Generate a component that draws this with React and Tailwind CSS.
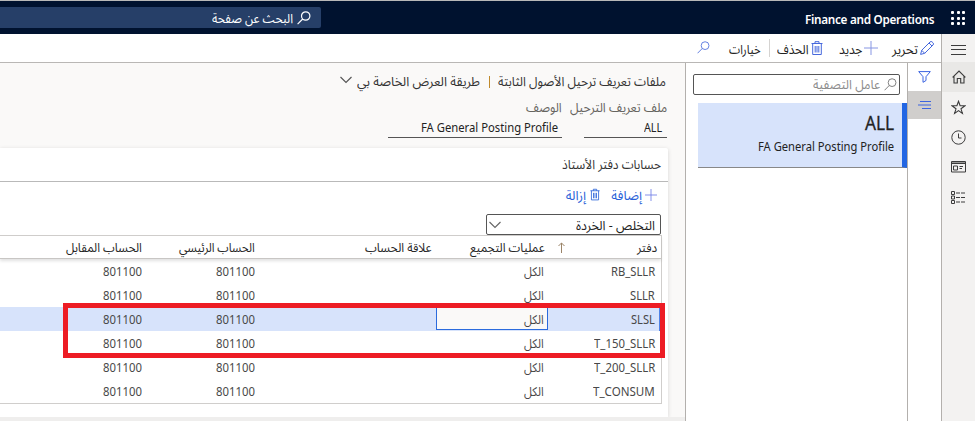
import { useLayoutEffect, useRef, useState } from "react";

// Text run that is condensed or stretched to fill its given width.
function Fit({ w, ltr = false, className = "", children }) {
  const ref = useRef(null);
  const [scale, setScale] = useState(1);
  useLayoutEffect(() => {
    const natural = ref.current.offsetWidth;
    if (natural) setScale(w / natural);
  }, [w, children]);
  return (
    <span dir={ltr ? "ltr" : "rtl"} className={`block shrink-0 whitespace-nowrap ${className}`} style={{ width: w }}>
      <span
        ref={ref}
        className={`inline-block ${ltr ? "origin-left" : "origin-right"}`}
        style={{ transform: `scaleX(${scale})` }}
      >
        {children}
      </span>
    </span>
  );
}

function Svg({ className = "", box = "0 0 16 16", sw = 1, children }) {
  return (
    <svg viewBox={box} className={`block shrink-0 ${className}`} fill="none" stroke="currentColor" strokeWidth={sw}>
      {children}
    </svg>
  );
}

const Search = ({ className, sw = 1 }) => (
  <Svg className={className} box="0 0 14 14" sw={sw}>
    <circle cx="8.7" cy="5" r="4.2" />
    <path d="M5.7 8 .6 13.2" />
  </Svg>
);
const Plus = ({ className }) => (
  <Svg className={className} box="0 0 14 14">
    <path d="M7 0v14M0 7h14" />
  </Svg>
);
const Trash = ({ className }) => (
  <Svg className={className} box="0 0 12 14">
    <path d="M.5 2.500h11M4 2.500V.7h4v1.800M1.700 2.500v11h8.600v-11M4.200 5v6.500M6 5v6.500M7.800 5v6.500" />
  </Svg>
);
const Chevron = ({ className }) => (
  <Svg className={className} box="0 0 12 8" sw={1.15}>
    <path d="M.5 1 6 6.500 11.500 1" />
  </Svg>
);

const rows = [
  ["RB_SLLR", 44],
  ["SLLR", 25],
  ["SLSL", 24],
  ["T_150_SLLR", 61],
  ["T_200_SLLR", 61],
  ["T_CONSUM", 62],
];

function Header() {
  return (
    <header className="flex h-[34px] shrink-0 border-t border-[#b8b8b8] bg-[#00122f] text-white">
      <div className="mr-[10px] mt-[10px] grid h-[14px] w-[14px] shrink-0 grid-cols-[3px_3px_3px] content-between justify-between">
        {Array.from({ length: 9 }, (_, i) => (
          <i key={i} className="h-[3px] w-[3px] rounded-[1px] bg-white" />
        ))}
      </div>
      <Fit w={129} ltr className="mr-[17px] mt-[8px] text-[13px] font-semibold leading-5 tracking-tight">
        Finance and Operations
      </Fit>
      <div className="mr-auto mt-[6px] flex h-[21px] w-[321px] items-center rounded-r-[2px] bg-[#263f68] pr-[10px]">
        <Search className="h-[14px] w-[14px]" sw={1.2} />
        <Fit w={81} className="mr-[4px] text-[13px] leading-5">البحث عن صفحة</Fit>
      </div>
    </header>
  );
}

function Rail() {
  return (
    <nav className="flex w-[34px] shrink-0 flex-col items-center border-l border-[#b3b0ad] bg-[#f3f2f1] text-[#3c3c3c]">
      <div className="flex h-[28px] w-full items-center justify-center">
        <Svg className="mt-[3px] h-[10px] w-[15px]" box="0 0 15 10">
          <path d="M0 .5h15M0 4.500h15M0 9.500h15" />
        </Svg>
      </div>
      <div className="flex h-[30px] w-full items-center justify-center bg-[#e9e8e6]">
        <Svg className="h-[14px] w-[14px]" box="0 0 14 14" sw={1.1}>
          <path d="M.6 7.300 7 1l6.400 6.300M2 6v7h3.300V8.500h3.400V13H12V6" />
        </Svg>
      </div>
      <div className="flex h-[30px] items-center">
        <Svg className="h-[15px] w-[15px]" box="0 0 15 15" sw={1.1}>
          <path d="m7.500 1.300 1.600 4.500h4.800l-3.900 3 1.400 4.600-3.900-2.800-3.900 2.800L5 8.800l-3.900-3h4.800z" />
        </Svg>
      </div>
      <div className="flex h-[30px] items-center">
        <Svg className="h-[15px] w-[15px]" box="0 0 15 15">
          <circle cx="7.500" cy="7.500" r="6.700" />
          <path d="M7.500 3.500v4.500h3" />
        </Svg>
      </div>
      <div className="flex h-[30px] items-center">
        <Svg className="h-[12px] w-[15px]" box="0 0 15 12">
          <path d="M.5.5h14v10.500H.5zM.5 2.500h14M2.500 5h4v4h-4zM8.500 5.500H12M8.500 7.500h2.500" />
          <path d="M.5 1.500h14" opacity=".5" />
        </Svg>
      </div>
      <div className="flex h-[30px] items-center">
        <Svg className="h-[13px] w-[15px]" box="0 0 15 13">
          <path d="M.5.500h3v3h-3zM.5 5h3v3h-3zM.5 9.500h3v3h-3z" />
          <path d="M5 2h4M10 2h4M5 6.500h4M10 6.500h4M5 11h4M10 11h4" />
        </Svg>
      </div>
    </nav>
  );
}

function Toolbar() {
  return (
    <div className="flex h-[29px] shrink-0 border-b border-[#b9b7b5] bg-white text-[13px] leading-5 text-[#222]">
      <Svg className="mr-[7px] mt-[7px] h-[14px] w-[14px] text-[#4668dc]" box="0 0 14 14">
        <path d="m.6 13.400 1.100-4.100L10 1a1.500 1.500 0 0 1 2.200 0l.8.800a1.500 1.500 0 0 1 0 2.200l-8.300 8.300zM9 2l3 3M1.700 9.300l3 3" />
      </Svg>
      <Fit w={26} className="mr-[2px] mt-[5px]">تحرير</Fit>
      <Plus className="mr-[14px] mt-[7px] h-[14px] w-[14px] text-[#8796e3]" />
      <Fit w={23} className="mr-[2px] mt-[5px]">جديد</Fit>
      <Trash className="mr-[16px] mt-[7px] h-[14px] w-[12px] text-[#4668dc]" />
      <Fit w={31} className="mr-[3px] mt-[5px]">الحذف</Fit>
      <i className="mr-[7px] mt-[5px] h-[18px] w-px bg-[#d5d3d1]" />
      <Fit w={32} className="mr-[8px] mt-[5px]">خيارات</Fit>
      <Search className="mr-[19px] mt-[7px] h-[13px] w-[13px] text-[#5a78df]" />
    </div>
  );
}

function FilterPane() {
  return (
    <>
      <div className="w-[34px] shrink-0 border-l border-[#b3b0ad] bg-white text-[#3c64e0]">
        <div className="flex h-[28px] items-center justify-center">
          <Svg className="h-[12px] w-[13px]" box="0 0 13 12">
            <path d="M.7.600h11.600L8 5.700v3.800L5 11.300V5.700z" />
          </Svg>
        </div>
        <div className="flex h-[28px] items-center justify-center bg-[#d0cecc]">
          <Svg className="h-[8px] w-[13px]" box="0 0 13 8">
            <path d="M2 .5h11M0 4h13M4 7.500h9" />
          </Svg>
        </div>
      </div>
      <div className="w-[222px] shrink-0 border-l border-[#b3b0ad] bg-white text-[#222]">
        <div className="mr-[7px] mt-[11px] flex h-[21px] w-[207px] items-center rounded-[2px] border border-[#555] pr-[2px]">
          <Search className="h-[13px] w-[13px] text-[#777]" />
          <Fit w={67} className="mb-[2px] mr-[4px] text-[13px] leading-5 text-[#8c8c8c]">عامل التصفية</Fit>
        </div>
        <div className="mt-[8px] flex h-[65px] w-[209px] flex-col border-b border-r-[5px] border-b-[#888] border-r-[#2266e3] bg-[#d7e3fb] pr-[8px]">
          <Fit w={29} ltr className="mt-[7px] text-[19px] leading-[26px] [-webkit-text-stroke:0.3px]">ALL</Fit>
          <Fit w={136} ltr className="text-[12.5px] leading-[21px]">FA General Posting Profile</Fit>
        </div>
      </div>
    </>
  );
}

const cols = "grid grid-cols-[113px_112px_181px_113px_142px]";

function Table() {
  return (
    <div className="relative w-[662px] border-y border-r border-[#d0cecc] text-[12.5px]">
      <div className={`${cols} h-[23px] border-b border-[#c8c6c4] leading-[23px] text-[#252525] shadow-[0_2px_3px_rgba(0,0,0,0.12)]`}>
        <div className="flex items-center pr-[4px]">
          <Fit w={20}>دفتر</Fit>
          <Svg className="mr-[72px] h-[11px] w-[7px] text-[#9b8468]" box="0 0 7 11">
            <path d="M3.500 11V.800M.5 4l3-3 3 3" />
          </Svg>
        </div>
        <div className="pr-[3px]"><Fit w={75}>عمليات التجميع</Fit></div>
        <div className="pr-[4px]"><Fit w={67}>علاقة الحساب</Fit></div>
        <div><Fit w={76}>الحساب الرئيسي</Fit></div>
        <div><Fit w={76}>الحساب المقابل</Fit></div>
      </div>
      {rows.map(([name, w], i) => (
        <div
          key={name}
          className={`${cols} h-6 leading-[25px] text-[#484848] ${i === 2 ? "bg-[#d7e3fb] shadow-[inset_-2px_0_0_#4f82e6]" : ""}`}
        >
          <div className="pr-[6px]"><Fit w={w} ltr>{name}</Fit></div>
          <div className={`${i === 2 ? "h-[23px] border border-[#2b6bdd] bg-[#faf9f8] pr-[3px] leading-[23px]" : "pr-[4px]"}`}>
            <Fit w={20}>الكل</Fit>
          </div>
          <div />
          <div><Fit w={39} ltr>801100</Fit></div>
          <div><Fit w={39} ltr>801100</Fit></div>
        </div>
      ))}
      <div className="pointer-events-none absolute -right-[4px] top-[67px] h-[55px] w-[602px] border-[5px] border-[#ed1c24]" />
    </div>
  );
}

function Details() {
  return (
    <main className="flex min-w-0 flex-1 flex-col bg-[#faf9f8] text-[#333]">
      <div className="flex h-[35px] items-center pr-[19px] pt-[1px] text-[13px] leading-5">
        <Fit w={168}>ملفات تعريف ترحيل الأصول الثابتة</Fit>
        <i className="mr-[8px] mt-[2px] h-[12px] w-px shrink-0 bg-[#c08a2c]" />
        <Fit w={123} className="mr-[9px]">طريقة العرض الخاصة بي</Fit>
        <Chevron className="mb-[3px] mr-[5px] h-[8px] w-[12px] text-[#555]" />
      </div>
      <div className="flex pr-[18px] text-[13px] leading-5 text-[#66645f]">
        <div className="w-[83px]">
          <div className="flex h-[18px] items-center"><Fit w={97}>ملف تعريف الترحيل</Fit></div>
          <div className="flex h-[22px] items-center border-b border-[#555] pr-[5px] pt-[2px] text-[12.5px] text-[#222]">
            <Fit w={18} ltr>ALL</Fit>
          </div>
        </div>
        <div className="mr-[22px] w-[174px]">
          <div className="flex h-[18px] items-center"><Fit w={36}>الوصف</Fit></div>
          <div className="flex h-[22px] items-center border-b border-[#555] pr-[4px] pt-[2px] text-[12.5px] text-[#222]">
            <Fit w={137} ltr>FA General Posting Profile</Fit>
          </div>
        </div>
      </div>
      <section className="mr-[17px] mt-[10px] h-[269px] shrink-0 rounded-tr-[2px] bg-white shadow-[0_1px_4px_rgba(0,0,0,0.15)]">
        <div className="flex h-[34px] items-center border-b border-[#b9b9b9] pb-[2px] pr-[7px] text-[13px] leading-5">
          <Fit w={99}>حسابات دفتر الأستاذ</Fit>
        </div>
        <div className="flex h-[32px] items-start pr-[11px] pt-[3px] text-[13px] leading-5 text-[#2861d8]">
          <Plus className="mt-[4px] h-[12px] w-[12px] text-[#7180e6]" />
          <Fit w={31} className="mr-[3px]">إضافة</Fit>
          <Trash className="mr-[11px] mt-[3px] h-[13px] w-[10px]" />
          <Fit w={20} className="mr-[4px]">إزالة</Fit>
        </div>
        <div className="mr-[7px] flex h-[21px] w-[175px] items-center justify-between rounded-[2px] border border-[#555] pl-[2px] pr-[5px] text-[13px] leading-5 text-[#222]">
          <Fit w={79}>التخلص - الخردة</Fit>
          <Chevron className="h-[8px] w-[12px] text-[#666]" />
        </div>
        <div className="mr-[6px] flex">
          <Table />
        </div>
      </section>
      <div className="flex-1 bg-[#efeeed]" />
    </main>
  );
}

export default function App() {
  return (
    <div dir="rtl" className="flex h-[421px] w-[975px] flex-col overflow-hidden bg-white font-['Noto_Sans','Noto_Sans_Arabic','DejaVu_Sans',sans-serif]">
      <Header />
      <div className="flex min-h-0 flex-1">
        <Rail />
        <div className="flex min-w-0 flex-1 flex-col">
          <Toolbar />
          <div className="flex min-h-0 flex-1">
            <FilterPane />
            <Details />
          </div>
        </div>
      </div>
    </div>
  );
}
